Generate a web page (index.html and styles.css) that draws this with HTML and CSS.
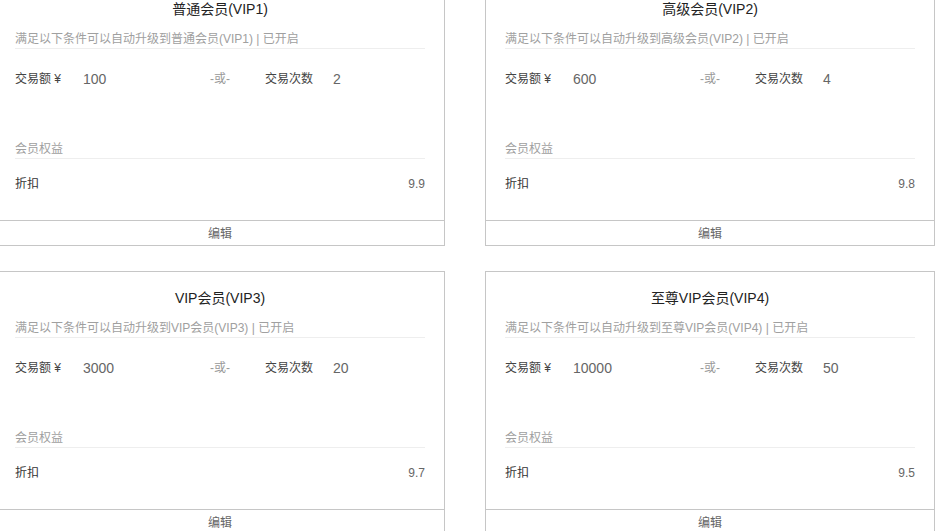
FILE: index.html
```html
<!DOCTYPE html>
<html lang="zh-CN">
<head>
    <meta charset="UTF-8">
    <meta name="viewport" content="width=device-width, initial-scale=1.0">
    <title>会员等级</title>
    <link rel="stylesheet" href="styles.css">
</head>
<body>
    <div class="level-list" id="levelList">
        <!-- level cards are rendered here -->
    </div>
    <script>
        document.addEventListener('DOMContentLoaded', function() {
            const levels = [
                { name: '普通会员(VIP1)', amount: '100', times: '2', discount: '9.9' },
                { name: '高级会员(VIP2)', amount: '600', times: '4', discount: '9.8' },
                { name: 'VIP会员(VIP3)', amount: '3000', times: '20', discount: '9.7' },
                { name: '至尊VIP会员(VIP4)', amount: '10000', times: '50', discount: '9.5' }
            ];
            const list = document.getElementById('levelList');

            levels.forEach(level => {
                const card = document.createElement('div');
                card.className = 'level-card';
                card.innerHTML = `
                    <h3 class="level-title">${level.name}</h3>
                    <div class="level-body">
                        <div class="section-head">满足以下条件可以自动升级到${level.name} | 已开启</div>
                        <div class="cond-row">
                            <span class="cond-label">交易额 ¥</span>
                            <span class="cond-value cond-first">${level.amount}</span>
                            <span class="cond-or">-或-</span>
                            <span class="cond-label">交易次数</span>
                            <span class="cond-value">${level.times}</span>
                        </div>
                        <div class="section-head rights-head">会员权益</div>
                        <div class="rights-row">
                            <span>折扣</span>
                            <span class="rights-value">${level.discount}</span>
                        </div>
                    </div>
                    <div class="level-foot">编辑</div>
                `;
                list.appendChild(card);
            });
        });
    </script>
</body>
</html>
```

FILE: styles.css
```css
body {
    margin: 0;
    padding: 0;
    background: #fff;
    font-family: "Liberation Sans", "Noto Sans CJK SC", sans-serif;
    font-size: 12px;
    color: #333;
    overflow: hidden;
}
.level-list {
    display: grid;
    grid-template-columns: 450px 450px;
    column-gap: 40px;
    row-gap: 25px;
    margin: -18px 0 0 -5px;
}
.level-card {
    border: 1px solid #c6c6c6;
    height: 262px;
    display: flex;
    flex-direction: column;
}
.level-title {
    margin: 0;
    padding-top: 16px;
    line-height: 20px;
    font-size: 14px;
    font-weight: normal;
    text-align: center;
    color: #222;
}
.level-body {
    flex: 1;
    padding: 9px 19px 0;
}
.section-head {
    padding-top: 2px;
    line-height: 18px;
    color: #a0a0a0;
    border-bottom: 1px solid #eee;
}
.cond-row {
    display: flex;
    align-items: center;
    margin-top: 20px;
    line-height: 20px;
}
.cond-label {
    width: 68px;
    color: #444;
}
.cond-value {
    font-size: 14px;
    color: #666;
}
.cond-first {
    width: 127px;
}
.cond-or {
    width: 55px;
    color: #999;
}
.rights-head {
    margin-top: 49px;
}
.rights-row {
    display: flex;
    justify-content: space-between;
    margin-top: 15px;
    line-height: 20px;
    color: #333;
}
.rights-value {
    color: #666;
}
.level-foot {
    border-top: 1px solid #c6c6c6;
    padding-top: 2px;
    line-height: 22px;
    height: 22px;
    text-align: center;
    color: #666;
}
```
